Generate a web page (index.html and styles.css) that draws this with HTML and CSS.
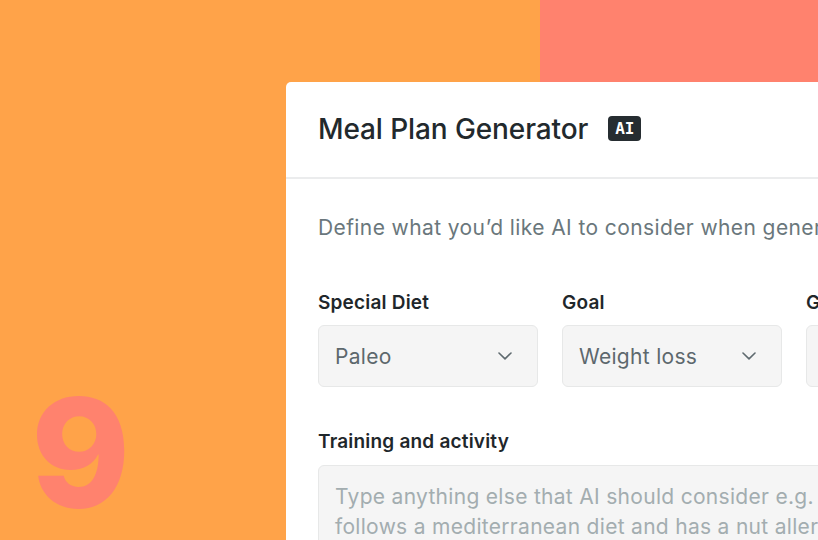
FILE: index.html
```html
<!DOCTYPE html>
<html>
<head>
<meta charset="utf-8">
<link rel="stylesheet" href="styles.css">
</head>
<body>
<div class="stage">
  <div class="accent"></div>
  <div class="number">9</div>
  <div class="card">
    <div class="card-header">
      <h1 class="title">Meal Plan Generator</h1>
      <span class="badge">AI</span>
    </div>
    <div class="card-body">
      <p class="intro">Define what you’d like AI to consider when generating your plan</p>
      <div class="fields">
        <div class="field">
          <label class="label">Special Diet</label>
          <div class="select"><span>Paleo</span><svg class="chev" width="14" height="8" viewBox="0 0 14 8"><path d="M1 1 7 6.8 13 1" fill="none" stroke="#5f6a6f" stroke-width="1.6" stroke-linecap="round" stroke-linejoin="round"/></svg></div>
        </div>
        <div class="field">
          <label class="label">Goal</label>
          <div class="select"><span>Weight loss</span><svg class="chev" width="14" height="8" viewBox="0 0 14 8"><path d="M1 1 7 6.8 13 1" fill="none" stroke="#5f6a6f" stroke-width="1.6" stroke-linecap="round" stroke-linejoin="round"/></svg></div>
        </div>
        <div class="field">
          <label class="label">Gender</label>
          <div class="select"><span>Female</span><svg class="chev" width="14" height="8" viewBox="0 0 14 8"><path d="M1 1 7 6.8 13 1" fill="none" stroke="#5f6a6f" stroke-width="1.6" stroke-linecap="round" stroke-linejoin="round"/></svg></div>
        </div>
      </div>
      <div class="field wide">
        <label class="label">Training and activity</label>
        <div class="textarea">Type anything else that AI should consider e.g. Client<br>follows a mediterranean diet and has a nut allergy</div>
      </div>
    </div>
  </div>
</div>
</body>
</html>
```

FILE: styles.css
```css
html, body {
  margin: 0;
  padding: 0;
}
body {
  width: 818px;
  height: 540px;
  overflow: hidden;
  font-family: "Inter", "Noto Sans", sans-serif;
}
.stage {
  position: relative;
  width: 818px;
  height: 540px;
  background: #ffa349;
  overflow: hidden;
}
.accent {
  position: absolute;
  left: 540px;
  top: 0;
  width: 278px;
  height: 200px;
  background: #ff826e;
}
.number {
  position: absolute;
  left: 31px;
  top: 363px;
  font-family: "Inter", sans-serif;
  font-weight: 800;
  font-size: 150px;
  line-height: 180px;
  color: #ff826e;
  letter-spacing: -2px;
}
.card {
  position: absolute;
  left: 286px;
  top: 82px;
  width: 700px;
  height: 520px;
  background: #fff;
  border-radius: 5px;
}
.card-header {
  display: flex;
  align-items: center;
  gap: 20px;
  height: 93px;
  padding: 0 32px 2px;
  border-bottom: 2px solid #ebeced;
}
.title {
  margin: 0;
  font-size: 28px;
  line-height: 34px;
  font-weight: 500;
  color: #22292d;
  letter-spacing: -0.1px;
}
.badge {
  display: inline-flex;
  align-items: center;
  justify-content: center;
  width: 33px;
  height: 25px;
  border-radius: 4px;
  background: #262d31;
  color: #fff;
  font-family: "DejaVu Sans Mono", monospace;
  font-weight: bold;
  font-size: 16px;
}
.card-body {
  padding: 34px 32px 0;
}
.intro {
  margin: 0;
  font-size: 21px;
  line-height: 30px;
  letter-spacing: 0.4px;
  color: #6a777c;
  white-space: nowrap;
}
.fields {
  display: flex;
  gap: 24px;
  margin-top: 47px;
}
.field {
  display: flex;
  flex-direction: column;
  gap: 9px;
}
.label {
  font-size: 19px;
  line-height: 26px;
  font-weight: 600;
  letter-spacing: 0.2px;
  color: #1f272b;
}
.select {
  box-sizing: border-box;
  width: 220px;
  height: 62px;
  display: flex;
  align-items: center;
  justify-content: space-between;
  padding: 0 25px 0 16px;
  background: #f5f5f5;
  border: 1px solid #e7e8e8;
  border-radius: 6px;
  font-size: 21px;
  letter-spacing: 0.3px;
  color: #5d686d;
}
.chev {
  display: block;
}
.wide {
  margin-top: 42px;
  gap: 10px;
}
.textarea {
  box-sizing: border-box;
  width: 560px;
  height: 140px;
  padding: 16px 16px;
  background: #f5f5f5;
  border: 1px solid #e7e8e8;
  border-radius: 6px;
  font-size: 21px;
  line-height: 30px;
  letter-spacing: 0.3px;
  color: #a3adb0;
  white-space: nowrap;
}
```
